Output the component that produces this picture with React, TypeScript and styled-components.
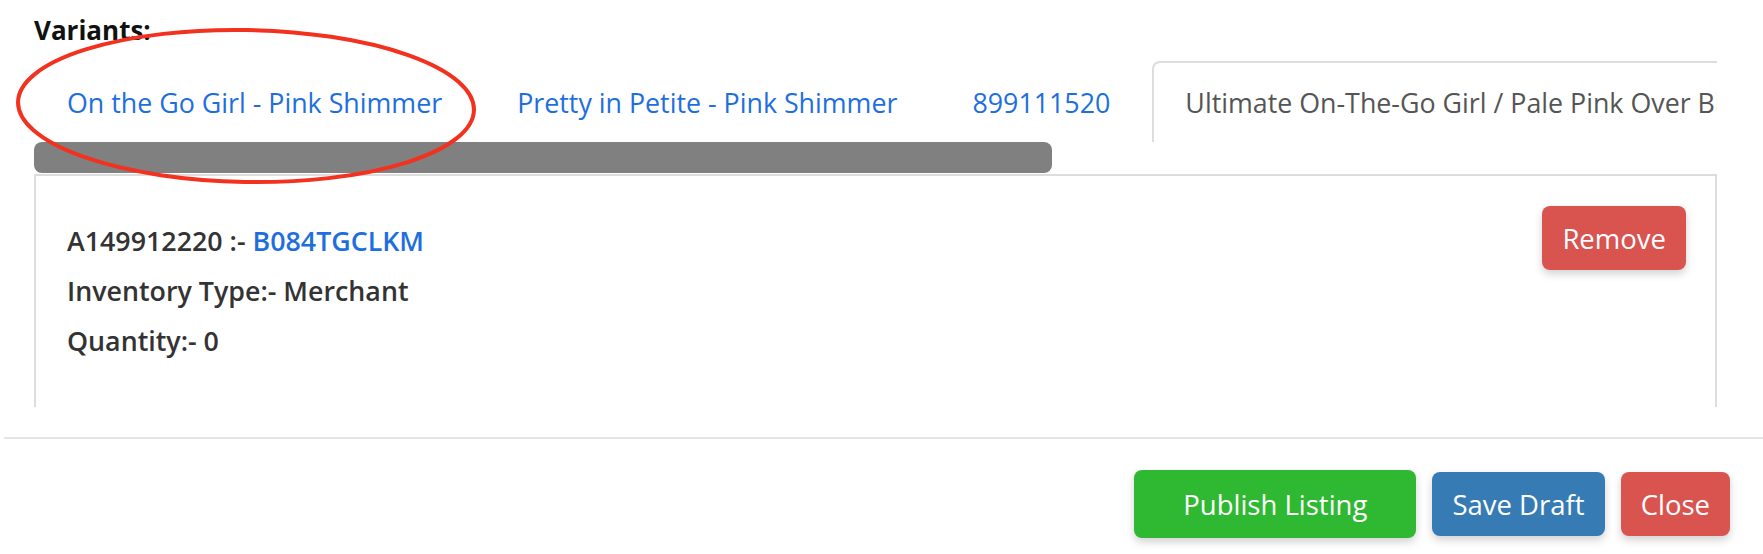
import React from 'react';
import styled, { createGlobalStyle } from 'styled-components';

const GlobalStyle = createGlobalStyle`
  html, body {
    margin: 0;
    padding: 0;
    background: #ffffff;
  }
  body {
    font-family: 'Open Sans', 'Noto Sans', sans-serif;
    color: #333;
  }
`;

// Page shell
const Page = styled.div`
  position: relative;
  width: 1763px;
  height: 554px;
  overflow: hidden;
`;

const Body = styled.div`
  padding: 14px 46px 0 34px;
`;

const Heading = styled.h4`
  margin: 0;
  font-size: 26px;
  line-height: 32px;
  font-weight: 700;
  color: #111;
`;

// Tabs
const TabStrip = styled.div`
  margin-top: 15px;
  display: flex;
  overflow: hidden;
  white-space: nowrap;
`;

const Tab = styled.div<{ $active?: boolean }>`
  flex-shrink: 0;
  height: 81px;
  box-sizing: border-box;
  display: flex;
  align-items: center;
  padding: 0 31px;
  margin-right: 9px;
  border: 2px solid ${(p) => (p.$active ? '#dddddd' : 'transparent')};
  border-bottom: none;
  border-radius: 8px 8px 0 0;
  font-size: 26.8px;
  color: ${(p) => (p.$active ? '#555555' : '#1e6fdd')};
  cursor: pointer;
`;

const ScrollTrack = styled.div`
  height: 32px;
`;

const ScrollThumb = styled.div`
  width: 1018px;
  height: 31px;
  border-radius: 8px;
  background: #808080;
`;

// Variant panel
const Panel = styled.div`
  height: 233px;
  box-sizing: border-box;
  border: 2px solid #dddddd;
  border-bottom: none;
  padding: 30px 29px 0 31px;
  display: flex;
  justify-content: space-between;
  align-items: flex-start;
`;

const Details = styled.div`
  padding-top: 10px;
  font-size: 26.8px;
  font-weight: 600;
  line-height: 50px;
  color: #333;
`;

const Link = styled.a`
  color: #1e6fdd;
  text-decoration: none;
`;

// Buttons
const tones = {
  danger: '#d9534f',
  primary: '#377bb5',
  success: '#2fb932',
};

const Button = styled.button<{ $tone: keyof typeof tones; $large?: boolean }>`
  font-family: inherit;
  font-size: 27.5px;
  color: #fff;
  border: none;
  border-radius: 8px;
  height: ${(p) => (p.$large ? '68px' : '64px')};
  padding: 0 ${(p) => (p.$large ? '49px' : '20px')};
  background: ${(p) => tones[p.$tone]};
  box-shadow: 0 4px 8px rgba(0, 0, 0, 0.18);
  cursor: pointer;
`;

const Footer = styled.div`
  margin-top: 30px;
  margin-left: 4px;
  border-top: 2px solid #e5e5e5;
  padding: 31px 33px 0 0;
  display: flex;
  justify-content: flex-end;
  align-items: center;
  gap: 16px;
`;

// Red hand-drawn annotation
const Annotation = styled.svg`
  position: absolute;
  left: 0;
  top: 0;
  pointer-events: none;
`;

const tabs = [
  'On the Go Girl - Pink Shimmer',
  'Pretty in Petite - Pink Shimmer',
  '899111520',
  'Ultimate On-The-Go Girl / Pale Pink Over Blue Ombre - Classic Collection',
];

export default function App() {
  return (
    <Page>
      <GlobalStyle />
      <Body>
        <Heading>Variants:</Heading>
        <TabStrip>
          {tabs.map((t, i) => (
            <Tab key={t} $active={i === 3}>
              {t}
            </Tab>
          ))}
        </TabStrip>
        <ScrollTrack>
          <ScrollThumb />
        </ScrollTrack>
        <Panel>
          <Details>
            <div>
              A149912220 :- <Link href="#">B084TGCLKM</Link>
            </div>
            <div>Inventory Type:- Merchant</div>
            <div>Quantity:- 0</div>
          </Details>
          <Button $tone="danger">Remove</Button>
        </Panel>
      </Body>
      <Footer>
        <Button $tone="success" $large>
          Publish Listing
        </Button>
        <Button $tone="primary">Save Draft</Button>
        <Button $tone="danger">Close</Button>
      </Footer>
      <Annotation width="500" height="200" viewBox="0 0 500 200">
        <ellipse
          cx="246"
          cy="106"
          rx="228"
          ry="76"
          fill="none"
          stroke="#f2311f"
          strokeWidth="4"
          transform="rotate(1 246 106)"
        />
      </Annotation>
    </Page>
  );
}
